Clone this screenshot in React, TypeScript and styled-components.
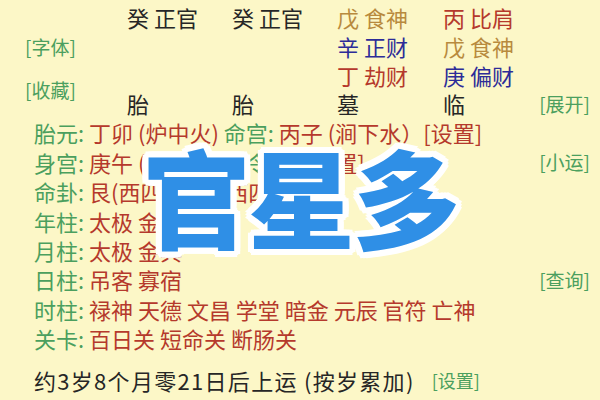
import styled, { createGlobalStyle } from 'styled-components';

const GlobalStyle = createGlobalStyle`
  html, body {
    margin: 0;
    padding: 0;
    background: #fcf7c7;
  }
`;

type Tone = 'ink' | 'red' | 'navy' | 'tan' | 'green';

const tones: Record<Tone, string> = {
  ink: '#262626',
  red: '#b5392c',
  navy: '#2d2c98',
  tan: '#b88a3e',
  green: '#4b9f5e',
};

const pillars: { text: string; tone: Tone }[][] = [
  [
    { text: '癸 正官', tone: 'ink' },
    { text: '癸 正官', tone: 'ink' },
    { text: '戊 食神', tone: 'tan' },
    { text: '丙 比肩', tone: 'red' },
  ],
  [
    { text: '', tone: 'ink' },
    { text: '', tone: 'ink' },
    { text: '辛 正财', tone: 'navy' },
    { text: '戊 食神', tone: 'tan' },
  ],
  [
    { text: '', tone: 'ink' },
    { text: '', tone: 'ink' },
    { text: '丁 劫财', tone: 'red' },
    { text: '庚 偏财', tone: 'navy' },
  ],
  [
    { text: '胎', tone: 'ink' },
    { text: '胎', tone: 'ink' },
    { text: '墓', tone: 'ink' },
    { text: '临', tone: 'ink' },
  ],
];

interface Part {
  text: string;
  tone: Tone;
}

interface Row {
  parts: Part[];
  action?: string;
}

const rows: Row[] = [
  {
    parts: [
      { text: '胎元: ', tone: 'green' },
      { text: '丁卯 (炉中火) ', tone: 'red' },
      { text: '命宫: ', tone: 'green' },
      { text: '丙子 (涧下水）[设置]', tone: 'red' },
    ],
  },
  {
    parts: [
      { text: '身宫: ', tone: 'green' },
      { text: '庚午 (路旁土) ', tone: 'red' },
      { text: '司令: ', tone: 'green' },
      { text: '戊 [设置]', tone: 'red' },
    ],
    action: '[小运]',
  },
  {
    parts: [
      { text: '命卦: ', tone: 'green' },
      { text: '艮(西四命) 坤(西四命)', tone: 'red' },
    ],
  },
  {
    parts: [
      { text: '年柱: ', tone: 'green' },
      { text: '太极 金舆', tone: 'red' },
    ],
  },
  {
    parts: [
      { text: '月柱: ', tone: 'green' },
      { text: '太极 金舆', tone: 'red' },
    ],
  },
  {
    parts: [
      { text: '日柱: ', tone: 'green' },
      { text: '吊客 寡宿', tone: 'red' },
    ],
    action: '[查询]',
  },
  {
    parts: [
      { text: '时柱: ', tone: 'green' },
      { text: '禄神 天德 文昌 学堂 暗金 元辰 官符 亡神', tone: 'red' },
    ],
  },
  {
    parts: [
      { text: '关卡: ', tone: 'green' },
      { text: '百日关 短命关 断肠关', tone: 'red' },
    ],
  },
];

export default function App() {
  return (
    <>
      <GlobalStyle />
      <Page>
        <PillarGrid>
          <SideAction $row="2">[字体]</SideAction>
          <SideAction $row="3 / span 2">[收藏]</SideAction>
          {pillars.map((line, r) =>
            line.map((cell, c) => (
              <Cell key={`${r}-${c}`} $tone={cell.tone} $row={r + 1} $col={c + 2}>
                {cell.text}
              </Cell>
            ))
          )}
          <EndAction>[展开]</EndAction>
        </PillarGrid>

        <Details>
          {rows.map((row, i) => (
            <Line key={i}>
              <span>
                {row.parts.map((p, j) => (
                  <Text key={j} $tone={p.tone}>{p.text}</Text>
                ))}
              </span>
              {row.action && <Action>{row.action}</Action>}
            </Line>
          ))}
        </Details>

        <Luck>
          <span>约3岁8个月零21日后上运 (按岁累加)</span>
          <SmallAction>[设置]</SmallAction>
        </Luck>

        <Banner>官星多</Banner>
      </Page>
    </>
  );
}

const Page = styled.div`
  position: relative;
  width: 600px;
  height: 400px;
  overflow: hidden;
  background: #fcf7c7;
  font-family: 'Noto Sans CJK SC', 'Noto Sans', sans-serif;
  font-size: 22px;
  color: ${tones.ink};
`;

const PillarGrid = styled.div`
  display: grid;
  grid-template-columns: 127px 105px 105px 106px 1fr auto;
  grid-template-rows: repeat(4, 28.7px);
  padding: 3px 10px 0 0;
  align-items: center;
`;

const SideAction = styled.span<{ $row: string }>`
  grid-column: 1;
  grid-row: ${({ $row }) => $row};
  align-self: center;
  padding-left: 25px;
  font-size: 19px;
  color: ${tones.green};
`;

const Cell = styled.span<{ $tone: Tone; $row: number; $col: number }>`
  grid-row: ${({ $row }) => $row};
  grid-column: ${({ $col }) => $col};
  color: ${({ $tone }) => tones[$tone]};
  white-space: pre;
`;

const EndAction = styled.span`
  grid-row: 4;
  grid-column: 6;
  font-size: 19px;
  color: ${tones.green};
`;

const Details = styled.div`
  display: flex;
  flex-direction: column;
`;

const Line = styled.div`
  display: flex;
  justify-content: space-between;
  align-items: center;
  height: 29.4px;
  padding: 0 10px 0 34px;
  white-space: pre;
`;

const Text = styled.span<{ $tone: Tone }>`
  color: ${({ $tone }) => tones[$tone]};
`;

const Action = styled.span`
  font-size: 19px;
  color: ${tones.green};
`;

const Luck = styled.div`
  display: flex;
  align-items: center;
  gap: 17px;
  margin-top: 11px;
  padding-left: 34px;
  letter-spacing: 1.3px;
  color: ${tones.ink};
`;

const SmallAction = styled.span`
  font-size: 18px;
  letter-spacing: 0;
  color: ${tones.green};
`;

const Banner = styled.div`
  position: absolute;
  left: 143px;
  top: 141px;
  font-size: 107px;
  line-height: 1;
  font-weight: 900;
  letter-spacing: -2px;
  color: #2f8fe6;
  text-shadow:
    6px 0 0 #fff, -6px 0 0 #fff, 0 6px 0 #fff, 0 -6px 0 #fff,
    4px 4px 0 #fff, -4px 4px 0 #fff, 4px -4px 0 #fff, -4px -4px 0 #fff,
    6px 3px 0 #fff, -6px 3px 0 #fff, 6px -3px 0 #fff, -6px -3px 0 #fff,
    3px 6px 0 #fff, -3px 6px 0 #fff, 3px -6px 0 #fff, -3px -6px 0 #fff;
`;
